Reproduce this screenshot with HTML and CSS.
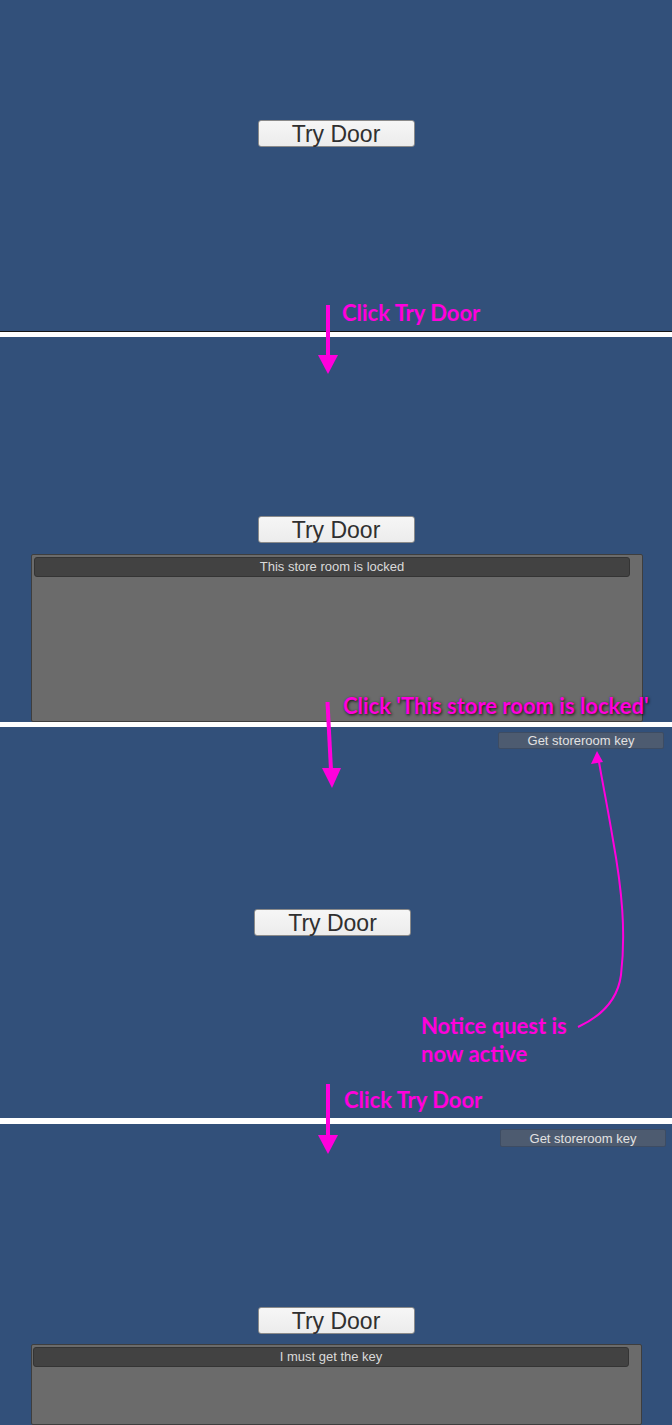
FILE: index.html
```html
<!DOCTYPE html>
<html>

<head>
    <title>Storeroom Quest - Walkthrough</title>
    <link rel="stylesheet" href="styles.css">
</head>

<body>
    <div class="page">
        <!-- step 1: nothing active yet -->
        <section class="screen screen-start">
            <button class="door-btn">Try Door</button>
        </section>
        <div class="divider divider-edge"></div>

        <!-- step 2: door is locked, dialog opens -->
        <section class="screen screen-locked">
            <button class="door-btn">Try Door</button>
            <div class="dialog">
                <div class="dialog-line">This store room is locked</div>
            </div>
        </section>
        <div class="divider"></div>

        <!-- step 3: quest shows up in the corner -->
        <section class="screen screen-quest">
            <button class="quest-btn">Get storeroom key</button>
            <button class="door-btn door-btn-left">Try Door</button>
        </section>
        <div class="divider divider-wide"></div>

        <!-- step 4: door again, new line -->
        <section class="screen screen-again">
            <button class="quest-btn quest-btn-wide">Get storeroom key</button>
            <button class="door-btn">Try Door</button>
            <div class="dialog dialog-narrow">
                <div class="dialog-line">I must get the key</div>
            </div>
        </section>

        <!-- arrows drawn over the screens -->
        <svg class="annotations" width="672" height="1425" viewBox="0 0 672 1425">
            <line x1="328" y1="305" x2="328" y2="357" class="arrow-line" />
            <polygon points="318,355 338,355 328,374" class="arrow-head" />

            <line x1="327.5" y1="702" x2="331" y2="770" class="arrow-line" />
            <polygon points="322,768 341,768 332,788" class="arrow-head" />

            <line x1="328" y1="1084" x2="328" y2="1137" class="arrow-line" />
            <polygon points="318,1135 338,1135 328,1154" class="arrow-head" />

            <path d="M578,1027 C604,1015 618,998 621,975 C626,932 622,890 613,840 C608,810 603,785 599,762" class="arrow-curve" />
            <polygon points="597,751 591,764 603,762" class="arrow-head" />
        </svg>

        <p class="note note-door">Click Try Door</p>
        <p class="note note-locked">Click 'This store room is locked'</p>
        <p class="note note-quest">Notice quest is<br>now active</p>
        <p class="note note-again">Click Try Door</p>
    </div>
</body>

</html>
```

FILE: styles.css
```css
body {
    margin: 0;
    padding: 0;
    background: #32507a;
    font-family: "Liberation Sans", Arial, sans-serif;
    overflow: hidden;
}

.page {
    position: relative;
    width: 672px;
    height: 1425px;
}

.screen {
    background-color: #32507a;
    display: flex;
    flex-direction: column;
    align-items: center;
    box-sizing: border-box;
}

.screen-start {
    height: 331px;
    padding-top: 120px;
}

.screen-locked {
    height: 385px;
    padding-top: 179px;
}

.screen-quest {
    height: 391px;
    padding-top: 5px;
}

.screen-again {
    height: 301px;
    padding-top: 5px;
}

.divider {
    height: 5px;
    background-color: #fff;
}

.divider-edge {
    height: 5px;
    border-top: 1px solid #151515;
}

.divider-wide {
    height: 6px;
}

/* big white game button */
.door-btn {
    width: 157px;
    height: 27px;
    box-sizing: border-box;
    padding: 0;
    background: linear-gradient(#f6f6f6, #ececec);
    border: 1px solid #8a8a8a;
    border-radius: 3px;
    color: #303030;
    font-family: "Liberation Sans", Arial, sans-serif;
    font-size: 23px;
    line-height: 26px;
    cursor: pointer;
}

.door-btn-left {
    margin-top: 160px;
    margin-right: 7px;
}

.screen-again .door-btn {
    margin-top: 160px;
}

/* quest tracker button, top right */
.quest-btn {
    align-self: flex-end;
    margin-right: 8px;
    width: 166px;
    height: 17px;
    box-sizing: border-box;
    padding: 0;
    background-color: #4d5b70;
    border: 1px solid #3d4c63;
    border-radius: 2px;
    color: #e2e2e2;
    font-family: "Liberation Sans", Arial, sans-serif;
    font-size: 13px;
    line-height: 15px;
}

.quest-btn-wide {
    margin-right: 6px;
    height: 18px;
}

/* dialog box */
.dialog {
    align-self: flex-start;
    margin-left: 31px;
    margin-top: 11px;
    width: 612px;
    flex: 1;
    box-sizing: border-box;
    padding: 2px 12px 0 2px;
    background-color: #6b6b6b;
    border: 1px solid #3e3e3e;
    border-radius: 2px;
}

.dialog-narrow {
    width: 611px;
    margin-top: 10px;
    padding-left: 1px;
}

.dialog-line {
    height: 20px;
    box-sizing: border-box;
    background-color: #424242;
    border: 1px solid #343434;
    border-radius: 3px;
    color: #dadada;
    font-size: 13px;
    line-height: 18px;
    text-align: center;
}

/* annotation layer */
.annotations {
    position: absolute;
    left: 0;
    top: 0;
    pointer-events: none;
}

.arrow-line {
    stroke: #ff00dc;
    stroke-width: 4;
}

.arrow-curve {
    fill: none;
    stroke: #ff00dc;
    stroke-width: 2;
}

.arrow-head {
    fill: #ff00dc;
}

.note {
    position: absolute;
    margin: 0;
    color: #ff00dc;
    font-family: Lato, "Open Sans", sans-serif;
    font-weight: bold;
    font-size: 22px;
    line-height: 22px;
    white-space: nowrap;
}

.note-door {
    left: 342px;
    top: 302px;
}

.note-locked {
    left: 343px;
    top: 695px;
    text-shadow: 1px 1px 3px rgba(0, 0, 0, 0.85);
}

.note-quest {
    left: 421px;
    top: 1012px;
    line-height: 28px;
}

.note-again {
    left: 344px;
    top: 1089px;
}
```
